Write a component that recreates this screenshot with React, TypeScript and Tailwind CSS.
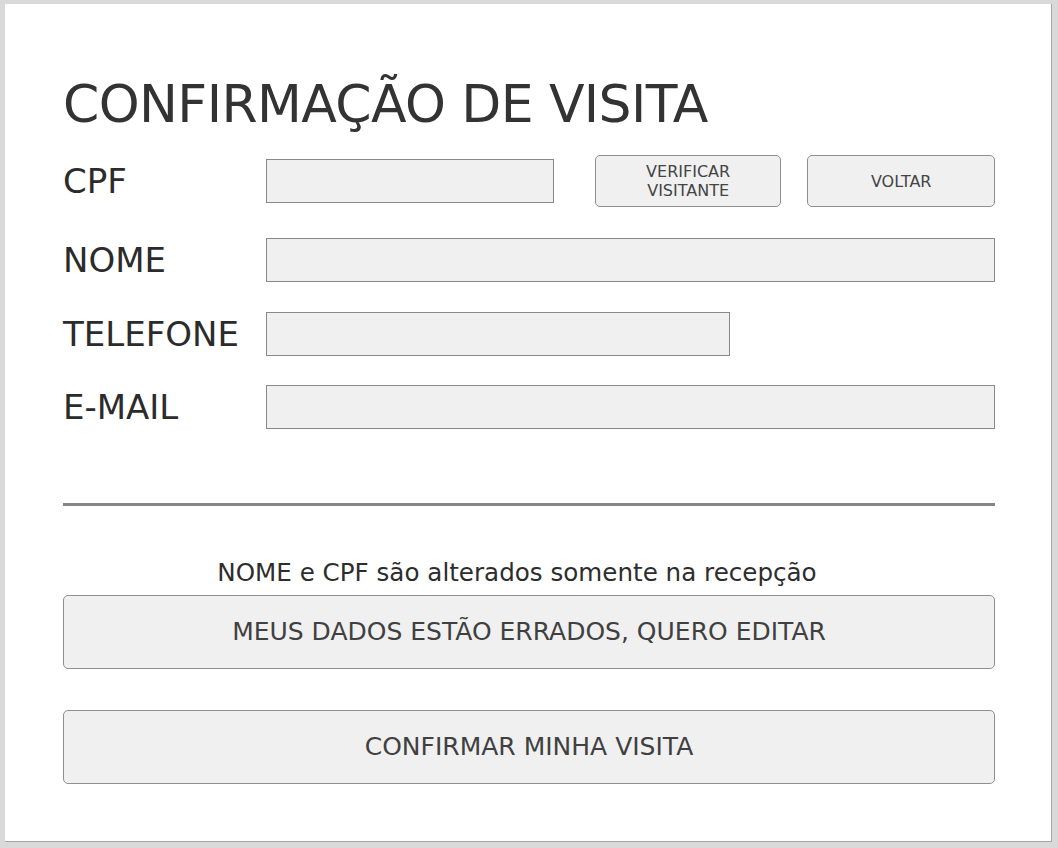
export default function App() {
  return (
    <div className="h-[848px] w-[1058px] bg-[#d9d9d9] pt-[4px] pl-[5px] pr-[6px] pb-[6px] font-['DejaVu_Sans',sans-serif]">
      <div className="h-full w-full bg-white border-r border-b border-[#a6a6a6] pl-[58px] pt-[74px]">
        <div className="w-[932px] flex flex-col">
          <h1 className="text-[52px] leading-none tracking-[-0.6px] text-[#333333] font-normal">
            CONFIRMAÇÃO DE VISITA
          </h1>

          <div className="mt-[25px] flex items-center h-[52px]">
            <div className="w-[203px] text-[34px] leading-none text-[#2b2b2b]">CPF</div>
            <input className="w-[289px] h-[44px] border border-[#8a8a8a] bg-[#f0f0f0] outline-none" />
            <button className="ml-[41px] w-[187px] h-[52px] rounded-[5px] border border-[#8f8f8f] bg-[#f0f0f0] text-[16px] leading-[19px] text-[#444444]">
              VERIFICAR
              <br />
              VISITANTE
            </button>
            <button className="ml-[26px] w-[188px] h-[52px] rounded-[5px] border border-[#8f8f8f] bg-[#f0f0f0] text-[16px] leading-[19px] text-[#444444]">
              VOLTAR
            </button>
          </div>

          <div className="mt-[31px] flex items-center h-[44px]">
            <div className="w-[203px] text-[34px] leading-none text-[#2b2b2b]">NOME</div>
            <input className="flex-1 h-[44px] border border-[#8a8a8a] bg-[#f0f0f0] outline-none" />
          </div>

          <div className="mt-[30px] flex items-center h-[44px]">
            <div className="w-[203px] text-[34px] leading-none text-[#2b2b2b] whitespace-nowrap">TELEFONE</div>
            <input className="w-[464px] h-[44px] border border-[#8a8a8a] bg-[#f0f0f0] outline-none" />
          </div>

          <div className="mt-[29px] flex items-center h-[44px]">
            <div className="w-[203px] text-[34px] leading-none text-[#2b2b2b]">E-MAIL</div>
            <input className="flex-1 h-[44px] border border-[#8a8a8a] bg-[#f0f0f0] outline-none" />
          </div>

          <div className="mt-[74px] h-[3px] bg-[#858585]" />

          <p className="mt-[54px] pr-[24px] text-center text-[24.6px] leading-[25px] text-[#2d2d2d]">
            NOME e CPF são alterados somente na recepção
          </p>

          <button className="mt-[10px] h-[74px] rounded-[5px] border border-[#8f8f8f] bg-[#f0f0f0] text-[25px] text-[#404040]">
            MEUS DADOS ESTÃO ERRADOS, QUERO EDITAR
          </button>

          <button className="mt-[41px] h-[74px] rounded-[5px] border border-[#8f8f8f] bg-[#f0f0f0] text-[25px] text-[#404040]">
            CONFIRMAR MINHA VISITA
          </button>
        </div>
      </div>
    </div>
  );
}
